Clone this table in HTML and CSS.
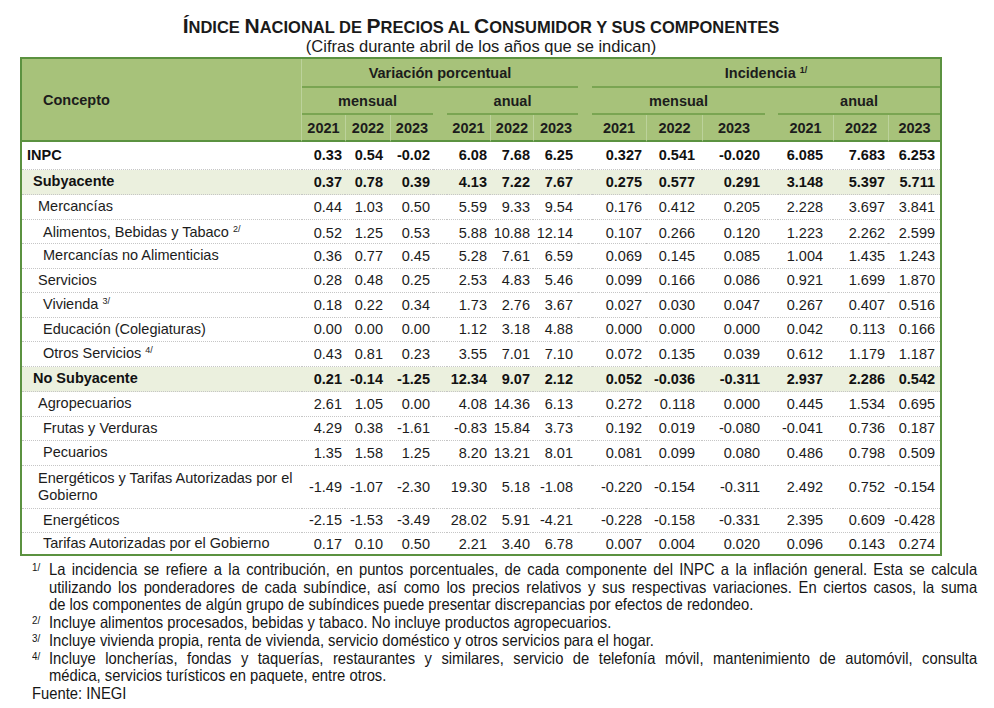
FILE: index.html
```html
<!DOCTYPE html>
<html lang="es">
<head>
<meta charset="utf-8">
<title>Índice Nacional de Precios al Consumidor y sus componentes</title>
<link rel="stylesheet" href="styles.css">
</head>
<body>
<div class="page">
  <h1 class="title"><span class="cap">Í</span>ndice <span class="cap">N</span>acional de <span class="cap">P</span>recios al <span class="cap">C</span>onsumidor y sus componentes</h1>
  <p class="subtitle">(Cifras durante abril de los años que se indican)</p>
  <table class="inpc">
    <colgroup>
      <col class="c-concepto">
      <col class="c43"><col class="c45"><col class="c43">
      <col class="c-sp">
      <col class="c43"><col class="c43"><col class="c45">
      <col class="c-sp">
      <col class="c54"><col class="c56"><col class="c63">
      <col class="c-sp13">
      <col class="c55"><col class="c55"><col class="c52">
    </colgroup>
    <thead>
      <tr class="h1">
        <th rowspan="3" class="concepto-h">Concepto</th>
        <th colspan="7" class="grp">Variación porcentual</th>
        <th rowspan="3" class="sp"></th>
        <th colspan="7" class="grp">Incidencia <sup>1/</sup></th>
      </tr>
      <tr class="h2">
        <th colspan="3" class="sub">mensual</th>
        <th rowspan="2" class="sp"></th>
        <th colspan="3" class="sub">anual</th>
        <th colspan="3" class="sub">mensual</th>
        <th rowspan="2" class="sp"></th>
        <th colspan="3" class="sub">anual</th>
      </tr>
      <tr class="h3">
        <th>2021</th><th>2022</th><th>2023</th>
        <th>2021</th><th>2022</th><th>2023</th>
        <th>2021</th><th>2022</th><th>2023</th>
        <th>2021</th><th>2022</th><th>2023</th>
      </tr>
    </thead>
    <tbody>
      <tr class="bold r-inpc">
        <td class="l0">INPC</td>
        <td>0.33</td><td>0.54</td><td>-0.02</td><td></td>
        <td>6.08</td><td>7.68</td><td>6.25</td><td></td>
        <td>0.327</td><td>0.541</td><td>-0.020</td><td></td>
        <td>6.085</td><td>7.683</td><td>6.253</td>
      </tr>
      <tr class="bold shade">
        <td class="l1">Subyacente</td>
        <td>0.37</td><td>0.78</td><td>0.39</td><td></td>
        <td>4.13</td><td>7.22</td><td>7.67</td><td></td>
        <td>0.275</td><td>0.577</td><td>0.291</td><td></td>
        <td>3.148</td><td>5.397</td><td>5.711</td>
      </tr>
      <tr>
        <td class="l2">Mercancías</td>
        <td>0.44</td><td>1.03</td><td>0.50</td><td></td>
        <td>5.59</td><td>9.33</td><td>9.54</td><td></td>
        <td>0.176</td><td>0.412</td><td>0.205</td><td></td>
        <td>2.228</td><td>3.697</td><td>3.841</td>
      </tr>
      <tr class="low">
        <td class="l3">Alimentos, Bebidas y Tabaco <sup>2/</sup></td>
        <td>0.52</td><td>1.25</td><td>0.53</td><td></td>
        <td>5.88</td><td>10.88</td><td>12.14</td><td></td>
        <td>0.107</td><td>0.266</td><td>0.120</td><td></td>
        <td>1.223</td><td>2.262</td><td>2.599</td>
      </tr>
      <tr>
        <td class="l3">Mercancías no Alimenticias</td>
        <td>0.36</td><td>0.77</td><td>0.45</td><td></td>
        <td>5.28</td><td>7.61</td><td>6.59</td><td></td>
        <td>0.069</td><td>0.145</td><td>0.085</td><td></td>
        <td>1.004</td><td>1.435</td><td>1.243</td>
      </tr>
      <tr>
        <td class="l2">Servicios</td>
        <td>0.28</td><td>0.48</td><td>0.25</td><td></td>
        <td>2.53</td><td>4.83</td><td>5.46</td><td></td>
        <td>0.099</td><td>0.166</td><td>0.086</td><td></td>
        <td>0.921</td><td>1.699</td><td>1.870</td>
      </tr>
      <tr>
        <td class="l3">Vivienda <sup>3/</sup></td>
        <td>0.18</td><td>0.22</td><td>0.34</td><td></td>
        <td>1.73</td><td>2.76</td><td>3.67</td><td></td>
        <td>0.027</td><td>0.030</td><td>0.047</td><td></td>
        <td>0.267</td><td>0.407</td><td>0.516</td>
      </tr>
      <tr>
        <td class="l3">Educación (Colegiaturas)</td>
        <td>0.00</td><td>0.00</td><td>0.00</td><td></td>
        <td>1.12</td><td>3.18</td><td>4.88</td><td></td>
        <td>0.000</td><td>0.000</td><td>0.000</td><td></td>
        <td>0.042</td><td>0.113</td><td>0.166</td>
      </tr>
      <tr>
        <td class="l3">Otros Servicios <sup>4/</sup></td>
        <td>0.43</td><td>0.81</td><td>0.23</td><td></td>
        <td>3.55</td><td>7.01</td><td>7.10</td><td></td>
        <td>0.072</td><td>0.135</td><td>0.039</td><td></td>
        <td>0.612</td><td>1.179</td><td>1.187</td>
      </tr>
      <tr class="bold shade">
        <td class="l1">No Subyacente</td>
        <td>0.21</td><td>-0.14</td><td>-1.25</td><td></td>
        <td>12.34</td><td>9.07</td><td>2.12</td><td></td>
        <td>0.052</td><td>-0.036</td><td>-0.311</td><td></td>
        <td>2.937</td><td>2.286</td><td>0.542</td>
      </tr>
      <tr>
        <td class="l2">Agropecuarios</td>
        <td>2.61</td><td>1.05</td><td>0.00</td><td></td>
        <td>4.08</td><td>14.36</td><td>6.13</td><td></td>
        <td>0.272</td><td>0.118</td><td>0.000</td><td></td>
        <td>0.445</td><td>1.534</td><td>0.695</td>
      </tr>
      <tr>
        <td class="l3">Frutas y Verduras</td>
        <td>4.29</td><td>0.38</td><td>-1.61</td><td></td>
        <td>-0.83</td><td>15.84</td><td>3.73</td><td></td>
        <td>0.192</td><td>0.019</td><td>-0.080</td><td></td>
        <td>-0.041</td><td>0.736</td><td>0.187</td>
      </tr>
      <tr>
        <td class="l3">Pecuarios</td>
        <td>1.35</td><td>1.58</td><td>1.25</td><td></td>
        <td>8.20</td><td>13.21</td><td>8.01</td><td></td>
        <td>0.081</td><td>0.099</td><td>0.080</td><td></td>
        <td>0.486</td><td>0.798</td><td>0.509</td>
      </tr>
      <tr class="two">
        <td class="l2">Energéticos y Tarifas Autorizadas por el Gobierno</td>
        <td>-1.49</td><td>-1.07</td><td>-2.30</td><td></td>
        <td>19.30</td><td>5.18</td><td>-1.08</td><td></td>
        <td>-0.220</td><td>-0.154</td><td>-0.311</td><td></td>
        <td>2.492</td><td>0.752</td><td>-0.154</td>
      </tr>
      <tr>
        <td class="l3">Energéticos</td>
        <td>-2.15</td><td>-1.53</td><td>-3.49</td><td></td>
        <td>28.02</td><td>5.91</td><td>-4.21</td><td></td>
        <td>-0.228</td><td>-0.158</td><td>-0.331</td><td></td>
        <td>2.395</td><td>0.609</td><td>-0.428</td>
      </tr>
      <tr class="last">
        <td class="l3">Tarifas Autorizadas por el Gobierno</td>
        <td>0.17</td><td>0.10</td><td>0.50</td><td></td>
        <td>2.21</td><td>3.40</td><td>6.78</td><td></td>
        <td>0.007</td><td>0.004</td><td>0.020</td><td></td>
        <td>0.096</td><td>0.143</td><td>0.274</td>
      </tr>
    </tbody>
  </table>
  <div class="notes">
    <div class="note"><span class="mk">1/</span><p><span class="ln">La incidencia se refiere a la contribución, en puntos porcentuales, de cada componente del INPC a la inflación general. Esta se calcula</span> <span class="ln">utilizando los ponderadores de cada subíndice, así como los precios relativos y sus respectivas variaciones. En ciertos casos, la suma</span> <span class="ln end">de los componentes de algún grupo de subíndices puede presentar discrepancias por efectos de redondeo.</span></p></div>
    <div class="note"><span class="mk">2/</span><p>Incluye alimentos procesados, bebidas y tabaco. No incluye productos agropecuarios.</p></div>
    <div class="note"><span class="mk">3/</span><p>Incluye vivienda propia, renta de vivienda, servicio doméstico y otros servicios para el hogar.</p></div>
    <div class="note"><span class="mk">4/</span><p><span class="ln">Incluye loncherías, fondas y taquerías, restaurantes y similares, servicio de telefonía móvil, mantenimiento de automóvil, consulta</span> <span class="ln end">médica, servicios turísticos en paquete, entre otros.</span></p></div>
    <div class="source">Fuente: INEGI</div>
  </div>
</div>
</body>
</html>
```
FILE: styles.css
```css
body {
  margin: 0;
  background: #ffffff;
  font-family: "Liberation Sans", Arial, sans-serif;
  color: #141414;
}

.page {
  padding: 17px 0 0 20px;
  width: 960px;
}

.title {
  width: 922px;
  margin: 0;
  text-align: center;
  font-size: 16.5px;
  line-height: 21px;
  font-weight: bold;
  text-transform: uppercase;
  color: #1a1a1a;
}

.title .cap {
  font-size: 21px;
  line-height: 0;
}

.subtitle {
  width: 922px;
  margin: 0 0 2px;
  text-align: center;
  font-size: 16.5px;
  line-height: 17px;
  color: #1a1a1a;
}

.inpc {
  table-layout: fixed;
  width: 922px;
  border-collapse: separate;
  border-spacing: 0;
  border: 2px solid #5b9240;
  font-size: 14.5px;
}

.c-concepto { width: 280px; }
.c43 { width: 43px; }
.c45 { width: 45px; }
.c-sp { width: 14px; }
.c-sp13 { width: 13px; }
.c52 { width: 52px; }
.c54 { width: 54px; }
.c55 { width: 55px; }
.c56 { width: 56px; }
.c63 { width: 63px; }

.inpc thead th {
  background: #a7c27a;
  font-weight: bold;
  padding: 0;
  color: #1c1c1c;
  text-align: center;
}

.inpc thead .h1 th { height: 27px; }
.inpc thead .h2 th { height: 25px; }
.inpc thead .h3 th { height: 25px; }

.inpc thead .grp,
.inpc thead .sub {
  border-bottom: 2px solid #7aa552;
}

.inpc thead .concepto-h {
  text-align: left;
  padding-left: 21px;
  border-bottom: 2px solid #5b9240;
  border-right: 1px solid #bcd29b;
}

.inpc thead .sp {
  border-bottom: 2px solid #5b9240;
}

.inpc thead .h3 th {
  border-bottom: 2px solid #5b9240;
  border-left: 1px solid #bcd29b;
}

.inpc thead .h3 th:nth-child(1),
.inpc thead .h3 th:nth-child(4),
.inpc thead .h3 th:nth-child(7),
.inpc thead .h3 th:nth-child(10) {
  border-left: 0;
}

.inpc sup {
  font-size: 9px;
  line-height: 0;
  vertical-align: 5px;
}

.inpc tbody td {
  height: 23.5px;
  padding: 0 3px 0 0;
  text-align: right;
  border-bottom: 1px dotted #c6c6c6;
  white-space: nowrap;
  color: #1c1c1c;
}

.inpc tbody tr.r-inpc td { height: 26.5px; }
.inpc tbody tr.shade td { height: 24.5px; background: #ebf0de; }
.inpc tbody tr.two td { height: 42px; }
.inpc tbody tr.last td { height: 21px; border-bottom: 0; }
.inpc tbody tr.low td { padding-top: 3px; height: 20.5px; }

.inpc tbody tr.bold td { font-weight: bold; color: #111; }

.inpc tbody td:first-child {
  text-align: left;
  white-space: normal;
  line-height: 17px;
}

.inpc tbody td.l0 { padding-left: 5px; }
.inpc tbody td.l1 { padding-left: 11px; }
.inpc tbody td.l2 { padding-left: 16px; }
.inpc tbody td.l3 { padding-left: 21px; }

/* per-column alignment tweaks */
.inpc tbody td:nth-child(3) { padding-right: 7px; }
.inpc tbody td:nth-child(8) { padding-right: 5px; }
.inpc tbody td:nth-child(10) { padding-right: 4px; }
.inpc tbody td:nth-child(11) { padding-right: 7px; }
.inpc tbody td:nth-child(12) { padding-right: 5px; }
.inpc tbody td:nth-child(14) { padding-right: 10px; }
.inpc tbody td:nth-child(15) { padding-right: 3px; }
.inpc tbody td:nth-child(16) { padding-right: 5px; }

.notes {
  width: 1056px;
  margin-top: 5px;
  margin-left: 12px;
  transform: scaleX(0.895);
  transform-origin: 0 0;
  font-family: "Liberation Sans", Arial, sans-serif;
  font-size: 16.5px;
  line-height: 17.7px;
  color: #161616;
}

.note {
  display: flex;
  gap: 7px;
}

.mk {
  flex: 0 0 12px;
  font-size: 11px;
  line-height: 12px;
}

.note p {
  margin: 0;
  flex: 1;
}

.ln {
  display: block;
  text-align: justify;
  text-align-last: justify;
  white-space: nowrap;
}

.ln.end {
  text-align: left;
  text-align-last: left;
}
```
